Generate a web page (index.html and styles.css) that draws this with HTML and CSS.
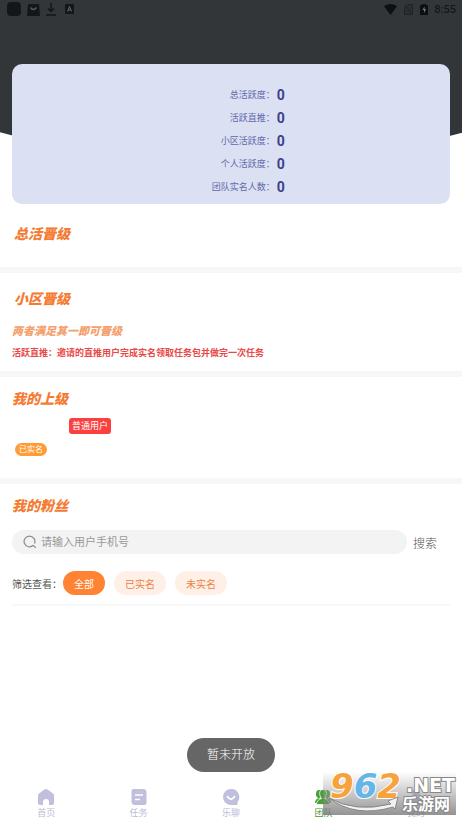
FILE: index.html
```html
<!DOCTYPE html>
<html lang="zh-CN">
<head>
<meta charset="utf-8">
<meta name="viewport" content="width=device-width, initial-scale=1">
<title>团队</title>
<link rel="stylesheet" href="styles.css">
</head>
<body>
<header class="hero">
  <div class="status">
    <div class="status-group">
      <svg width="14" height="14" viewBox="0 0 14 14"><rect width="14" height="14" rx="4" fill="#141719"/></svg>
      <svg width="13" height="13" viewBox="0 0 13 13"><path d="M1 1h11l1 12H0z" fill="#141719"/><path d="M3.500 4.500q3 4 6 0" fill="none" stroke="#565b5f" stroke-width="1.300"/></svg>
      <svg width="10" height="13" viewBox="0 0 10 13"><path d="M5 0v8M2 5.500l3 3 3-3M0 12h10" fill="none" stroke="#141719" stroke-width="1.500"/></svg>
      <svg class="status-app" width="9" height="10" viewBox="0 0 9 10"><rect width="9" height="10" rx="1" fill="#141719"/><path d="M2.500 7.500l2-5 2 5M3 6h3" fill="none" stroke="#62676b"/></svg>
    </div>
    <div class="status-group status-right">
      <svg width="13" height="11" viewBox="0 0 12 10"><path d="M0 2q6-4 12 0L6 10z" fill="#0d0f10"/></svg>
      <svg width="9" height="11" viewBox="0 0 9 11"><path d="M4 .5H8.500V10.500H.5V4zM.5 .5l8 10" fill="#2a2e30" stroke="#1f2325"/></svg>
      <svg width="8" height="11" viewBox="0 0 8 11"><path d="M2 1V0h4v1h2v10H0V1z" fill="#0d0f10"/><path d="M4.500 2.500L2.500 6H4v3l2-4H4.500z" fill="#777c80"/></svg>
      <span class="clock">8:55</span>
    </div>
  </div>
  <dl class="stats">
    <dt>总活跃度：</dt><dd>0</dd>
    <dt>活跃直推：</dt><dd>0</dd>
    <dt>小区活跃度：</dt><dd>0</dd>
    <dt>个人活跃度：</dt><dd>0</dd>
    <dt>团队实名人数：</dt><dd>0</dd>
  </dl>
</header>
<main>
  <section class="block block-total"><h2>总活晋级</h2></section>
  <section class="block block-area">
    <h2>小区晋级</h2>
    <p class="rule">两者满足其一即可晋级</p>
    <p class="notice">活跃直推：邀请的直推用户完成实名领取任务包并做完一次任务</p>
  </section>
  <section class="block block-leader">
    <h2>我的上级</h2>
    <div class="leader">
      <span class="level">普通用户</span>
      <span class="verified">已实名</span>
    </div>
  </section>
  <section class="block block-fans">
    <h2>我的粉丝</h2>
    <form class="search">
      <label class="search-box">
        <svg width="14" height="14" viewBox="0 0 14 14"><path d="M10.300 10.300A5.400 5.400 0 1 1 11.500 8.500M10.300 10.300L12.800 12.800" fill="none" stroke="#8b8b8b" stroke-width="1.200"/></svg>
        <input type="text" placeholder="请输入用户手机号" aria-label="用户手机号">
      </label>
      <button class="search-button" type="button">搜索</button>
    </form>
    <div class="filters">
      <span class="filter-label">筛选查看：</span>
      <button class="chip chip-active" type="button">全部</button>
      <button class="chip" type="button">已实名</button>
      <button class="chip" type="button">未实名</button>
    </div>
  </section>
</main>
<nav class="tabs">
  <a href="#home"><svg width="18" height="18" viewBox="0 0 18 18"><path d="M7.500 1.600Q9 .6 10.500 1.600L16 5.600Q17 6.400 17 7.600V15Q17 17 15 17H12V13.500Q12 11 9 11T6 13.500V17H3Q1 17 1 15V7.600Q1 6.400 2 5.600z" fill="#c0bfdc"/></svg>首页</a>
  <a href="#tasks"><svg width="18" height="18" viewBox="0 0 18 18"><path d="M3.500 1H13Q16.500 1 16.500 4.500V15Q16.500 17 14.500 17H5Q1.500 17 1.500 13.500V3Q1.500 1 3.500 1z" fill="#c0bfdc"/><path d="M5 7h8M5 11.500h5" stroke="#fff" stroke-width="1.600"/></svg>任务</a>
  <a href="#chat"><svg width="18" height="18" viewBox="0 0 18 18"><path d="M9 1A8 8 0 1 0 9 17H15.500V14A8 8 0 0 0 9 1" fill="#c0bfdc"/><path d="M5.500 8.500Q9 14 12.500 8.500" fill="none" stroke="#fff" stroke-width="1.800" stroke-linecap="round"/></svg>乐聊</a>
  <a class="tab-active" href="#team"><svg width="18" height="18" viewBox="0 0 18 18"><g fill="#46a035"><ellipse cx="5" cy="6" rx="3" ry="4"/><ellipse cx="13" cy="6" rx="3" ry="4"/><path d="M1 15q0-4 4-5l4 5 4-5q4 1 4 5z"/></g><path d="M9 1.500c3 0 4 3 3 6q-.500 2-1.500 3 5 1.500 5 6h-13q0-4.500 5-6Q6.500 9.500 6 7.500c-1-3 0-6 3-6z" fill="#46a035" stroke="#fff" stroke-width=".8"/></svg>团队</a>
  <a href="#me"><svg width="18" height="18" viewBox="0 0 18 18"><circle cx="9" cy="5" r="4" fill="#c0bfdc"/><path d="M1 17q1-7 8-7t8 7z" fill="#c0bfdc"/></svg>我的</a>
</nav>
<div class="toast" role="status">暂未开放</div>
<aside class="brand">
  <div class="brand-number"><span>9</span><span class="blue">6</span><span>2</span></div>
  <div class="brand-domain">.NET</div>
  <div class="brand-name">乐游网</div>
  <svg class="swoosh" width="70" height="20" viewBox="0 0 70 20"><path d="M0 3Q26 18 62 9L59 6 69 2 66 14 64 12Q26 23 0 3z" fill="#f2f2f2" stroke="#777" stroke-width=".8"/></svg>
</aside>
</body>
</html>
```
FILE: styles.css
```css
* { box-sizing: border-box; }

body {
  position: relative;
  display: flex;
  flex-direction: column;
  min-height: 100vh;
  margin: 0;
  background: #fff;
  color: #555;
  font-family: Roboto, "Noto Sans CJK SC", sans-serif;
  font-size: 10px;
}

h2, p, dl, dd { margin: 0; }
button, input { border: 0; padding: 0; background: none; font: inherit; color: inherit; }
svg { display: block; flex: none; }

.hero { position: relative; overflow: hidden; }
.hero::before {
  content: "";
  position: absolute;
  z-index: -1;
  top: 0;
  left: -25%;
  width: 150%;
  height: 160px;
  border-radius: 0 0 50% 50% / 0 0 108px 108px;
  background: #323639;
}

.status {
  display: flex;
  justify-content: space-between;
  height: 18px;
  margin-bottom: 46px;
  padding: 0 6px 0 7px;
}
.status-group { display: flex; align-items: center; gap: 6px; }
.status-app { margin-left: 3px; }
.status-right { gap: 7px; }
.clock { margin-left: -1px; color: #141719; font-size: 11px; font-weight: 500; }

.stats {
  display: grid;
  grid-template-columns: 3fr 2fr;
  grid-auto-rows: 23px;
  align-items: center;
  margin: 0 12px;
  padding: 19px 0 6px;
  border-radius: 10px;
  background: #dbe0f3;
}
.stats dt { color: #6269aa; font-size: 9px; text-align: right; }
.stats dd { padding-left: 2px; color: #3b4288; font-size: 14px; font-weight: 700; }

.block { padding: 0 12px; border-bottom: 6px solid #f7f7f7; }
.block h2 {
  color: #f57b33;
  font-size: 14px;
  font-style: italic;
  font-weight: 900;
  line-height: 20px;
}
.block-total { padding: 20px 14px 23px; }
.block-area { padding-top: 16px; padding-bottom: 10px; }
.block-area h2 { padding-left: 2px; }
.rule {
  margin-top: 15px;
  color: #f5a06d;
  font-size: 11px;
  font-style: italic;
  font-weight: 900;
  line-height: 16px;
}
.notice { margin-top: 5px; color: #e94848; font-size: 9px; font-weight: 700; line-height: 16px; }

.block-leader { padding-top: 12px; padding-bottom: 22px; }
.leader { display: flex; flex-direction: column; align-items: flex-start; gap: 9px; margin-top: 9px; }
.level {
  margin-left: 57px;
  padding: 0 3px;
  border-radius: 3px;
  background: #fa4140;
  color: #fff;
  font-size: 9px;
  line-height: 16px;
}
.verified {
  margin-left: 3px;
  padding: 0 4px;
  border-radius: 7px;
  background: #ff9c38;
  color: #fff;
  font-size: 8px;
  line-height: 13px;
}

.block-fans { padding: 12px 0 9px; margin: 0 12px; border-bottom-width: 2px; }
.search { display: flex; align-items: center; margin-top: 14px; }
.search-box {
  display: flex;
  flex: 1;
  align-items: center;
  gap: 4px;
  height: 24px;
  padding: 0 11px;
  border-radius: 12px;
  background: #f3f3f3;
  font-size: 11px;
}
.search-box input { flex: 1; min-width: 0; outline: none; }
.search-box input::placeholder { color: #999; opacity: 1; }
.search-button { margin: 0 13px 0 6px; color: #555; font-size: 12px; font-weight: 300; }

.filters { display: flex; align-items: center; margin-top: 17px; }
.filter-label { margin-right: 1px; }
.chip {
  height: 24px;
  margin-right: 9px;
  padding: 0 11px;
  border-radius: 12px;
  background: #fff0e7;
  color: #ed8145;
}
.chip-active { background: #ff8332; color: #fff; }

.tabs { display: grid; grid-template-columns: repeat(5, 1fr); margin-top: auto; padding-bottom: 1px; }
.tabs a {
  display: flex;
  flex-direction: column;
  align-items: center;
  color: #bdbbd7;
  font-size: 9px;
  line-height: 14px;
  text-decoration: none;
}
.tabs .tab-active { color: #46963b; }

.toast {
  position: absolute;
  bottom: 49px;
  left: 50%;
  padding: 0 20px;
  border-radius: 17px;
  background: #666;
  color: #fff;
  font-size: 12px;
  font-weight: 300;
  line-height: 34px;
  transform: translateX(-50%);
}

.brand {
  position: absolute;
  right: 6px;
  bottom: 6px;
  width: 133px;
  height: 43px;
  background: linear-gradient(rgba(255, 255, 255, .2), rgba(120, 120, 120, .8));
  font-family: "DejaVu Sans", "Noto Sans CJK SC", sans-serif;
  font-weight: 700;
}
.brand div { position: absolute; color: #fff; line-height: 1; paint-order: stroke fill; }
.brand .brand-number {
  top: -3px;
  left: 7px;
  color: #f7a23b;
  font-size: 34px;
  font-style: italic;
  -webkit-text-stroke: 2px #fff;
}
.brand-number .blue { color: #65b5e8; }
.brand .brand-domain { top: 4px; right: 1px; font-size: 19px; -webkit-text-stroke: 2px #888; }
.brand .brand-name { right: 6px; bottom: 2px; font-size: 16px; -webkit-text-stroke: 2px #888; }
.swoosh { position: absolute; left: 6px; bottom: 0; }
```
